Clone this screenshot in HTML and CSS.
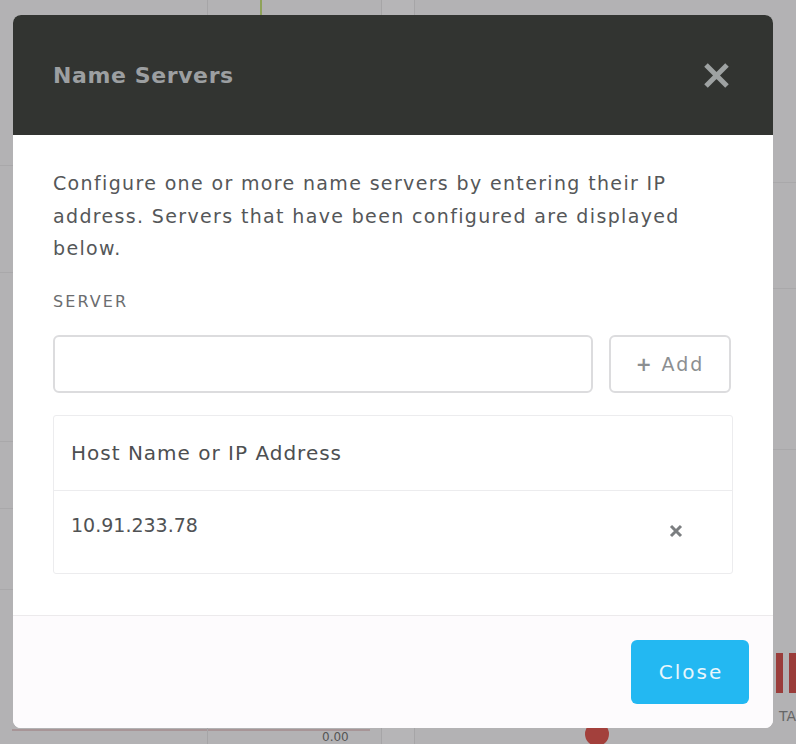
FILE: index.html
```html
<!DOCTYPE html>
<html>
<head>
<meta charset="utf-8">
<link rel="stylesheet" href="styles.css">
</head>
<body>
<div class="backdrop">
  <div class="dash">
    <div class="col c1"><div class="cell h1"></div><div class="cell h2"></div><div class="cell h3"></div><div class="cell h4"></div><div class="cell h5"></div><div class="redline"></div></div>
    <div class="col c2"><div class="spike"></div><div class="redline2"></div></div>
    <div class="col c3"><div class="zero">0.00</div></div>
    <div class="col c4"></div>
    <div class="col c5"><div class="cell r1"></div><div class="cell r2"></div><div class="cell r3"></div><div class="dot"></div><div class="bars"><span></span><span></span></div><div class="ta">TA</div></div>
  </div>
</div>
<div class="modal">
  <div class="modal-header">
    <h2 class="title">Name Servers</h2>
    <svg class="close-x" width="27" height="25" viewBox="0 0 27 25"><path d="M3 2 L24 23 M24 2 L3 23" stroke="#9ea2a2" stroke-width="5" stroke-linecap="butt"/></svg>
  </div>
  <div class="modal-body">
    <p class="desc">Configure one or more name servers by entering their IP address. Servers that have been configured are displayed below.</p>
    <div class="label">SERVER</div>
    <div class="form-row">
      <input class="input" type="text">
      <button class="btn-add"><span class="plus">+</span> Add</button>
    </div>
    <div class="table">
      <div class="thead">Host Name or IP Address</div>
      <div class="trow">
        <span class="ip">10.91.233.78</span>
        <svg class="del" width="14" height="14" viewBox="0 0 14 14"><path d="M2 2 L12 12 M12 2 L2 12" stroke="#7b7e80" stroke-width="3"/></svg>
      </div>
    </div>
  </div>
  <div class="modal-footer">
    <button class="btn-close">Close</button>
  </div>
</div>
</body>
</html>
```

FILE: styles.css
```css
html, body {
  margin: 0;
  padding: 0;
}
body {
  width: 796px;
  height: 744px;
  overflow: hidden;
  background: #b3b2b4;
  font-family: "DejaVu Sans", Verdana, sans-serif;
  position: relative;
}
.backdrop {
  height: 744px;
}
.dash {
  display: flex;
  height: 100%;
}
.col {
  border-right: 1px solid #a6a5a7;
  height: 100%;
  position: relative;
}
.c1 { width: 207px; display: flex; flex-direction: column; }
.c2 { width: 173px; }
.c3 { width: 32px; background: #b6b5b7; }
.c4 { width: 12px; border-right: none; }
.c5 { flex: 1; border-right: none; display: flex; flex-direction: column; }
.cell { border-bottom: 1px solid #a9a8aa; }
.h1 { height: 165px; }
.h2 { height: 106px; }
.h3 { height: 168px; }
.h4 { height: 66px; }
.h5 { height: 80px; }
.r1 { height: 182px; }
.r2 { height: 105px; }
.r3 { height: 160px; }
.redline {
  position: absolute;
  left: 12px;
  right: 0;
  top: 729px;
  height: 2px;
  background: #a79597;
}
.redline2 {
  position: absolute;
  left: 0;
  width: 162px;
  top: 729px;
  height: 2px;
  background: #a79597;
}
.spike {
  position: absolute;
  left: 52px;
  top: 0;
  width: 2px;
  height: 16px;
  background: #8fa25a;
}
.zero {
  position: absolute;
  left: -60px;
  top: 730px;
  font-size: 12px;
  color: #555;
}
.dot {
  position: absolute;
  left: 158px;
  top: 722px;
  width: 24px;
  height: 24px;
  border-radius: 50%;
  background: #a3403c;
}
.bars {
  position: absolute;
  right: 0;
  top: 653px;
  display: flex;
  gap: 6px;
}
.bars span {
  width: 7px;
  height: 40px;
  background: #9a3c3a;
}
.ta {
  position: absolute;
  right: 0;
  top: 708px;
  font-size: 14px;
  color: #666;
}

.modal {
  position: absolute;
  left: 13px;
  top: 15px;
  width: 760px;
  height: 713px;
  border-radius: 8px;
  overflow: hidden;
  background: #fff;
  display: flex;
  flex-direction: column;
}
.modal-header {
  height: 120px;
  background: #323431;
  display: flex;
  align-items: center;
  justify-content: space-between;
  padding: 0 43px 0 40px;
  box-sizing: border-box;
}
.title {
  margin: 0;
  font-size: 22px;
  font-weight: bold;
  letter-spacing: 0.6px;
  color: #9c9fa1;
}
.close-x {
  display: block;
}
.modal-body {
  padding: 32px 40px 41px;
  border-bottom: 1px solid #eceaec;
}
.desc {
  margin: 0;
  font-size: 19px;
  line-height: 32.5px;
  letter-spacing: 1.35px;
  color: #555759;
}
.label {
  margin-top: 27px;
  font-size: 16px;
  line-height: 20px;
  letter-spacing: 2.1px;
  color: #6b6d6f;
}
.form-row {
  margin-top: 23px;
  display: flex;
  gap: 16px;
}
.input {
  width: 540px;
  height: 58px;
  box-sizing: border-box;
  border: 2px solid #dcdcde;
  border-radius: 6px;
  background: #fff;
  margin: 0;
}
.btn-add {
  width: 122px;
  height: 58px;
  box-sizing: border-box;
  border: 2px solid #dcdcde;
  border-radius: 6px;
  background: #fff;
  font-family: "DejaVu Sans", Verdana, sans-serif;
  font-size: 19px;
  color: #8c8f91;
  letter-spacing: 2px;
  padding: 0;
}
.plus {
  font-weight: bold;
}
.table {
  margin-top: 22px;
  border: 1px solid #ececee;
  border-radius: 3px;
}
.thead {
  height: 74px;
  border-bottom: 1px solid #ececee;
  display: flex;
  align-items: center;
  padding: 0 17px;
  font-size: 20px;
  letter-spacing: 1px;
  color: #4d4f51;
}
.trow {
  height: 82px;
  display: flex;
  align-items: flex-start;
  justify-content: space-between;
  padding: 23px 49px 0 17px;
  box-sizing: border-box;
  font-size: 19px;
  color: #505254;
}
.del {
  margin-top: 10px;
}
.modal-footer {
  flex: 1;
  background: #fdfbfd;
  display: flex;
  justify-content: flex-end;
  align-items: flex-start;
  padding: 24px 24px 0 0;
}
.btn-close {
  width: 118px;
  height: 64px;
  border: none;
  border-radius: 6px;
  background: #23b8f2;
  color: #e8f6fc;
  font-family: "DejaVu Sans", Verdana, sans-serif;
  font-size: 20px;
  letter-spacing: 2px;
  padding: 0 0 0 2px;
}
```
